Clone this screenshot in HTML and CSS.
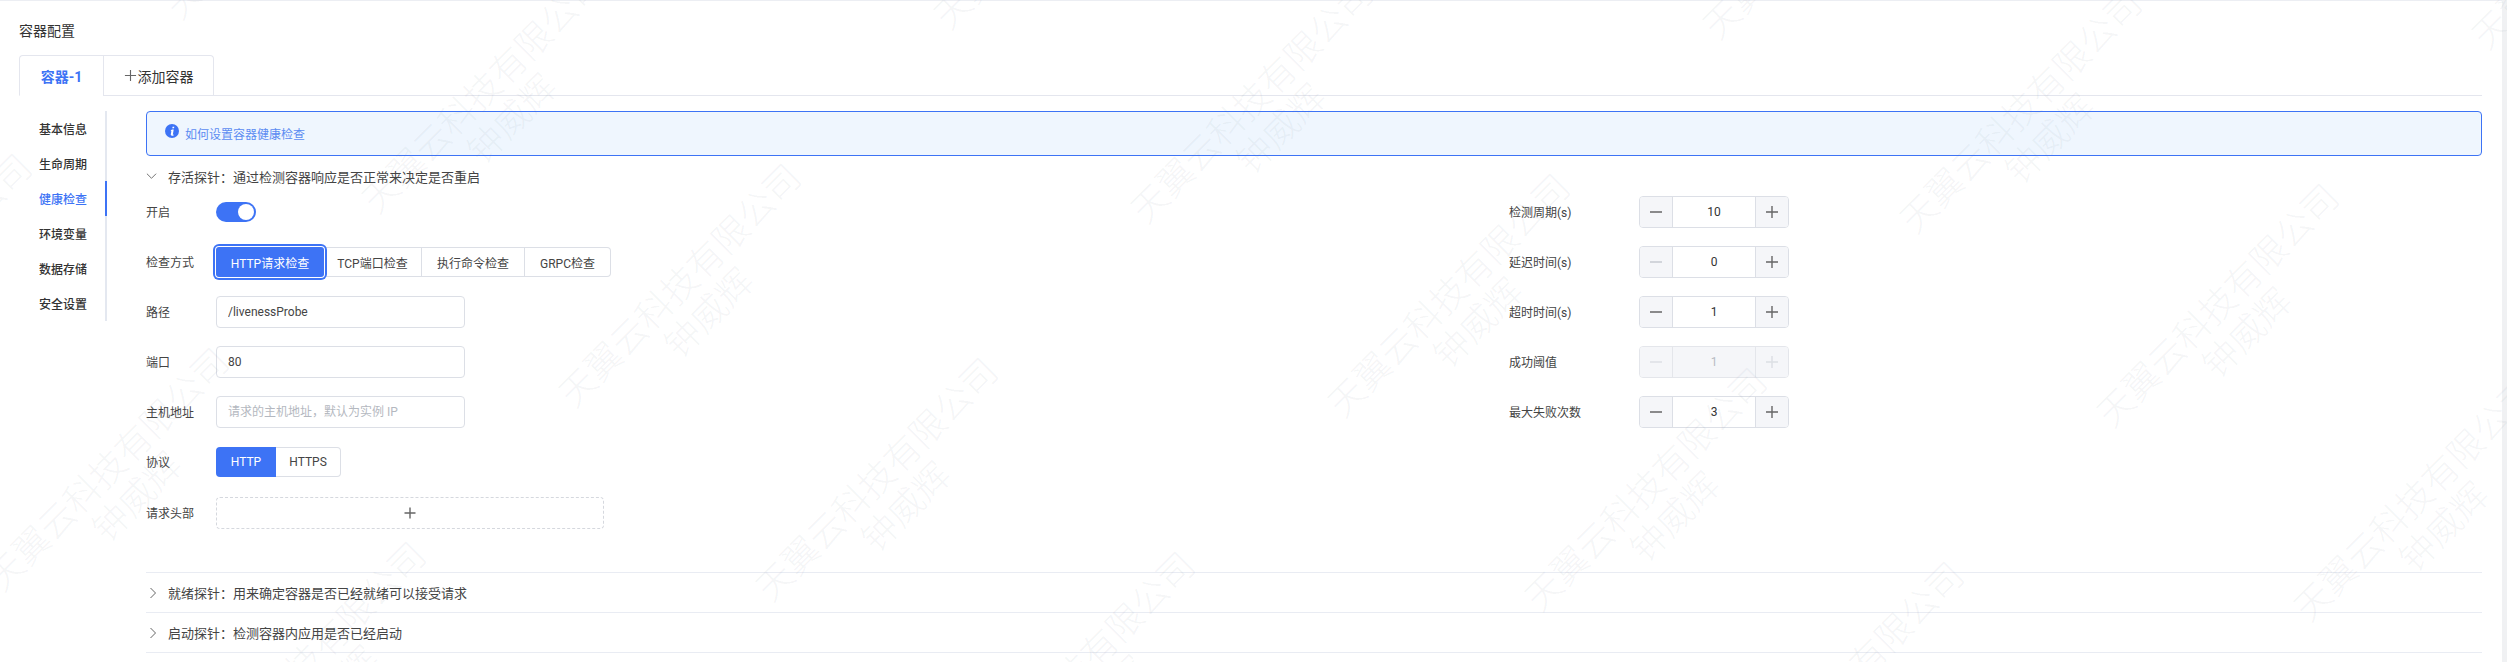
FILE: index.html
```html
<!DOCTYPE html>
<html lang="zh-CN">
<head>
<meta charset="utf-8">
<title>容器配置</title>
<link rel="stylesheet" href="styles.css">
</head>
<body>
<div class="page">
  <main class="main">
    <h2 class="title">容器配置</h2>
    <div class="tabs">
      <div class="tab tab-active">容器-1</div>
      <div class="tab tab-add"><svg class="tab-plus" viewBox="0 0 14 14"><path d="M7 1v12M1 7h12"/></svg>添加容器</div>
    </div>
    <div class="body">
      <nav class="side">
        <a class="side-item">基本信息</a>
        <a class="side-item">生命周期</a>
        <a class="side-item side-active">健康检查</a>
        <a class="side-item">环境变量</a>
        <a class="side-item">数据存储</a>
        <a class="side-item">安全设置</a>
      </nav>
      <section class="content">
        <div class="alert">
          <svg class="info" viewBox="0 0 14 14"><circle cx="7" cy="7" r="7"/><path class="info-i" d="M7.600 2.700h1.700l-.3 1.600H7.300zM7 5.400h1.700L7.900 10.200c-.1.500.1.600.8.400l-.1.800c-.4.200-1 .3-1.500.3-1 0-1.500-.5-1.300-1.400l.6-3.200-.7.100.1-.7z"/></svg>
          <span>如何设置容器健康检查</span>
        </div>
        <div class="probe-head">
          <svg class="chev-down" viewBox="0 0 12 8"><path d="M1 1.500l5 5 5-5"/></svg>
          <span>存活探针<span class="punct">：</span>通过检测容器响应是否正常来决定是否重启</span>
        </div>
        <div class="form">
          <div class="col">
            <div class="row"><label class="lab">开启</label><span class="switch"><i class="knob"></i></span></div>
            <div class="row"><label class="lab">检查方式</label>
              <div class="seg">
                <button class="seg-btn seg-on w-http">HTTP请求检查</button>
                <button class="seg-btn w-tcp">TCP端口检查</button>
                <button class="seg-btn w-exec">执行命令检查</button>
                <button class="seg-btn w-grpc">GRPC检查</button>
              </div>
            </div>
            <div class="row"><label class="lab">路径</label><input class="inp" value="/livenessProbe"></div>
            <div class="row"><label class="lab">端口</label><input class="inp" value="80"></div>
            <div class="row"><label class="lab">主机地址</label><input class="inp" placeholder="请求的主机地址，默认为实例 IP"></div>
            <div class="row"><label class="lab">协议</label>
              <div class="seg">
                <button class="seg-btn seg-fill w-p1">HTTP</button>
                <button class="seg-btn w-p2">HTTPS</button>
              </div>
            </div>
            <div class="row row-last"><label class="lab">请求头部</label>
              <div class="dashed"><svg class="ico" viewBox="0 0 14 14"><path d="M7 1.500v11M1.500 7h11"/></svg></div>
            </div>
          </div>
          <div class="col col-right">
            <div class="row"><label class="lab lab-r">检测周期(s)</label>
              <div class="step"><span class="step-btn"><svg class="ico" viewBox="0 0 14 14"><path d="M1 7h12"/></svg></span><input class="step-inp" value="10"><span class="step-btn"><svg class="ico" viewBox="0 0 14 14"><path d="M7 1v12M1 7h12"/></svg></span></div>
            </div>
            <div class="row"><label class="lab lab-r">延迟时间(s)</label>
              <div class="step"><span class="step-btn btn-off"><svg class="ico" viewBox="0 0 14 14"><path d="M1 7h12"/></svg></span><input class="step-inp" value="0"><span class="step-btn"><svg class="ico" viewBox="0 0 14 14"><path d="M7 1v12M1 7h12"/></svg></span></div>
            </div>
            <div class="row"><label class="lab lab-r">超时时间(s)</label>
              <div class="step"><span class="step-btn"><svg class="ico" viewBox="0 0 14 14"><path d="M1 7h12"/></svg></span><input class="step-inp" value="1"><span class="step-btn"><svg class="ico" viewBox="0 0 14 14"><path d="M7 1v12M1 7h12"/></svg></span></div>
            </div>
            <div class="row"><label class="lab lab-r">成功阈值</label>
              <div class="step step-off"><span class="step-btn btn-off"><svg class="ico" viewBox="0 0 14 14"><path d="M1 7h12"/></svg></span><input class="step-inp" value="1" disabled><span class="step-btn btn-off"><svg class="ico" viewBox="0 0 14 14"><path d="M7 1v12M1 7h12"/></svg></span></div>
            </div>
            <div class="row"><label class="lab lab-r">最大失败次数</label>
              <div class="step"><span class="step-btn"><svg class="ico" viewBox="0 0 14 14"><path d="M1 7h12"/></svg></span><input class="step-inp" value="3"><span class="step-btn"><svg class="ico" viewBox="0 0 14 14"><path d="M7 1v12M1 7h12"/></svg></span></div>
            </div>
          </div>
        </div>
        <div class="probe-closed">
          <svg class="chev-right" viewBox="0 0 8 12"><path d="M1.500 1l5 5-5 5"/></svg>
          <span>就绪探针<span class="punct">：</span>用来确定容器是否已经就绪可以接受请求</span>
        </div>
        <div class="probe-closed probe-end">
          <svg class="chev-right" viewBox="0 0 8 12"><path d="M1.500 1l5 5-5 5"/></svg>
          <span>启动探针<span class="punct">：</span>检测容器内应用是否已经启动</span>
        </div>
      </section>
    </div>
  </main>
  <div class="scroll"></div>
  <svg class="watermark" width="2507" height="662" viewBox="0 0 2507 662">
    <defs>
      <g id="wm" transform="rotate(-45)">
        <text class="wm-text" x="-18" y="13">天翼云科技有限公司</text>
        <text class="wm-text wm-name" x="145" y="53">钟威辉</text>
      </g>
    </defs>
    <use href="#wm" x="184" y="-1"/><use href="#wm" x="381" y="193"/><use href="#wm" x="578" y="387"/><use href="#wm" x="775" y="581"/><use href="#wm" x="972" y="775"/>
    <use href="#wm" x="953" y="9"/><use href="#wm" x="1150" y="203"/><use href="#wm" x="1347" y="397"/><use href="#wm" x="1544" y="591"/><use href="#wm" x="1741" y="785"/>
    <use href="#wm" x="1722" y="19"/><use href="#wm" x="1919" y="213"/><use href="#wm" x="2116" y="407"/><use href="#wm" x="2313" y="601"/><use href="#wm" x="2510" y="795"/>
    <use href="#wm" x="2491" y="29"/><use href="#wm" x="-191" y="377"/><use href="#wm" x="6" y="571"/><use href="#wm" x="203" y="765"/>
  </svg>
</div>
</body>
</html>
```
FILE: styles.css
```css
* { box-sizing: border-box; }
html, body { margin: 0; padding: 0; height: 100%; background: #fff; }
body {
  font-family: Roboto, "Noto Sans CJK SC", sans-serif;
  font-size: 12px;
  color: #444;
  overflow: hidden;
}
.page { position: relative; display: flex; width: 2507px; height: 662px; overflow: hidden; }
.main { flex: 1; min-width: 0; border-top: 1px solid #eceef3; padding: 0 20px 0 19px; }
.scroll { width: 5px; background: #f0f1f3; }

.title { margin: 0; height: 54px; padding-top: 20px; font-size: 14px; line-height: 20px; font-weight: 400; color: #333; }

.tabs { display: flex; height: 41px; border-bottom: 1px solid #e4e6ee; }
.tab {
  display: flex; align-items: center; justify-content: center;
  height: 41px; font-size: 14px; color: #333;
  border: 1px solid #e4e6ee; border-radius: 4px 4px 0 0;
}
.tab-active { width: 84px; color: #3d73f5; font-weight: 700; border-bottom-color: #fff; border-right: 0; border-radius: 4px 0 0 0; }
.tab-add { width: 111px; border-left: 1px solid #e4e6ee; border-bottom: 0; height: 40px; border-radius: 0 4px 0 0; }
.tab-plus { width: 13px; height: 13px; margin-right: 1px; fill: none; stroke: #666; stroke-width: 1.2; }

.body { display: flex; padding-top: 15px; }
.side { width: 88px; height: 210px; border-right: 2px solid #e4e8f0; flex: none; }
.side-item {
  position: relative; display: flex; align-items: center;
  height: 35px; padding-left: 20px; color: #333; font-weight: 500;
}
.side-active { color: #3d73f5; }
.side-active::after { content: ""; position: absolute; right: -2px; top: 0; bottom: 0; width: 2px; background: #3d73f5; }

.content { flex: 1; min-width: 0; margin-left: 39px; }
.alert {
  display: flex; align-items: center; gap: 6px;
  height: 45px; padding: 0 18px; background: #eff6fe;
  border: 1px solid #3d73f5; border-radius: 4px; color: #5c8cf2;
}
.info { width: 14px; height: 14px; margin-top: -5px; }
.info circle { fill: #3d73f5; }
.info-i { fill: #fff; }

.punct { font-family: "Noto Sans CJK TC", sans-serif; }
.probe-head { display: flex; align-items: center; height: 40px; font-size: 13px; color: #444; }
.chev-down { width: 11px; height: 8px; margin-right: 11px; fill: none; stroke: #666; stroke-width: 1; }

.form { display: flex; height: 377px; border-bottom: 1px solid #e9ecf3; }
.col { width: 1363px; display: flex; flex-direction: column; gap: 18px; }
.col-right { width: auto; }
.row { display: flex; align-items: center; height: 32px; }
.row-last { margin-top: 1px; }
.lab { width: 70px; flex: none; color: #444; padding-bottom: 2px; }
.lab-r { width: 130px; }

.switch { display: flex; justify-content: flex-end; align-items: center; width: 40px; height: 20px; padding-right: 2px; background: #3d73f5; border-radius: 10px; }
.knob { width: 16px; height: 16px; border-radius: 50%; background: #fff; }

.seg { display: flex; height: 30px; }
.seg-btn {
  height: 30px; padding: 0; font: inherit; color: #444; background: #fff;
  border: 1px solid #dcdfe6; border-left: 0; cursor: pointer;
}
.seg-btn:last-child { border-radius: 0 4px 4px 0; }
.seg-on { position: relative; z-index: 1; background: #3d73f5; color: #fff; border: 0; border-radius: 3px; box-shadow: 0 0 0 1px #fff, 0 0 0 3px #3d73f5; }
.seg-fill { background: #3d73f5; color: #fff; border: 0; border-radius: 4px 0 0 4px; }
.w-http { width: 108px; }
.w-tcp { width: 98px; }
.w-exec { width: 103px; }
.w-grpc { width: 86px; }
.w-p1 { width: 60px; }
.w-p2 { width: 65px; }

.inp {
  width: 249px; height: 32px; padding: 0 11px; font: inherit; color: #444;
  border: 1px solid #dcdfe6; border-radius: 4px; outline: 0; background: transparent;
}
.inp::placeholder { color: #b4b8c0; opacity: 1; }
.dashed { display: flex; align-items: center; justify-content: center; width: 388px; height: 32px; border: 1px dashed #d5d8de; border-radius: 4px; }
.ico { width: 14px; height: 14px; fill: none; stroke: #666; stroke-width: 1.400; }

.step { display: flex; width: 150px; height: 32px; border: 1px solid #dcdfe6; border-radius: 4px; overflow: hidden; }
.step-btn { display: flex; align-items: center; justify-content: center; width: 32px; flex: none; background: #f5f6f9; }
.step-inp {
  flex: 1; min-width: 0; border: 0; border-left: 1px solid #dcdfe6; border-right: 1px solid #dcdfe6;
  font: inherit; color: #333; text-align: center; outline: 0; padding: 0; background: #fff;
}
.btn-off .ico { stroke: #c6cad1; }
.step-off { border-color: #e4e6eb; }
.step-off .step-inp { background: #f5f6f9; color: #b8bcc4; border-color: #e4e6eb; }
.step-off .btn-off .ico { stroke: #dcdfe4; }

.probe-closed { display: flex; align-items: center; height: 40px; font-size: 13px; color: #444; border-bottom: 1px solid #e9ecf3; }
.chev-right { width: 8px; height: 12px; margin: 0 11px 0 3px; fill: none; stroke: #666; stroke-width: 1; }

.watermark { position: absolute; left: 0; top: 0; pointer-events: none; }
.wm-text { font-family: "Noto Sans CJK SC", sans-serif; font-weight: 300; font-size: 36px; fill: rgba(110, 120, 140, 0.075); }
.wm-name { text-anchor: middle; }
```
